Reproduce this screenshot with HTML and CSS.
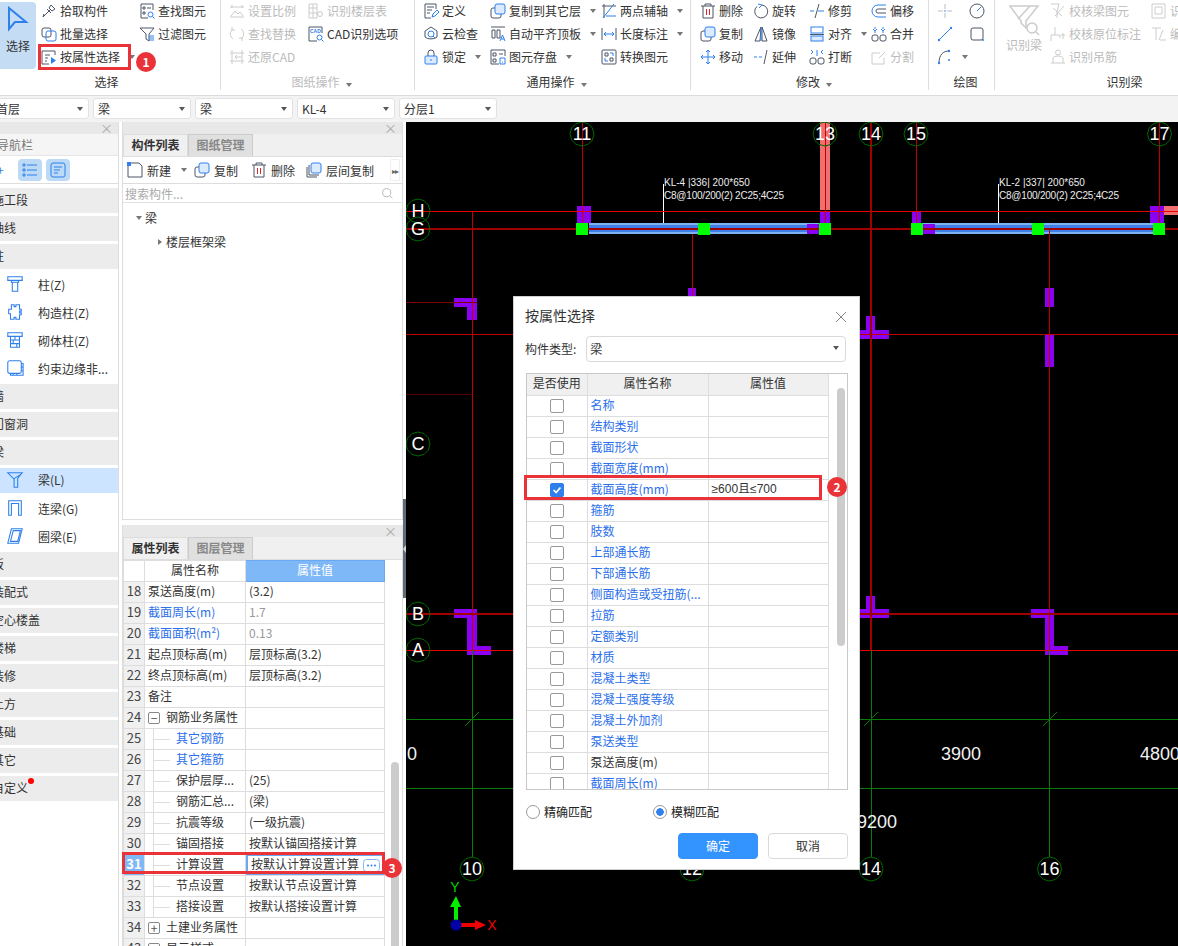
FILE: index.html
```html
<!DOCTYPE html>
<html lang="en">
<head>
  <meta charset="UTF-8" />
  <title>按属性选择</title>
  <link rel="stylesheet" href="styles.css">
</head>
<body>
<div class="app">

  <!-- Ribbon -->
  <div class="ribbon">
    <div class="group g1">
      <div class="group-body">
        <div class="big active">
          <svg class="big-ic" viewBox="0 0 24 26"><path class="b2" d="M3 2v21l6-7h11z"/></svg>
          <span>选择</span>
        </div>
        <div class="tool"><svg class="ic" viewBox="0 0 16 16"><path d="M2 14l7-7M6 6l4 4M10 2l4 4-3 2-3-3z M2 14l1-3"/></svg>拾取构件</div>
        <div class="tool"><svg class="ic" viewBox="0 0 16 16"><rect x="1" y="2" width="9" height="9" rx="2"/><rect class="b" x="5" y="5" width="10" height="10" rx="2"/></svg>批量选择</div>
        <div class="tool"><svg class="ic" viewBox="0 0 16 16"><path d="M14 6V2H1v13h7M4 6h5M4 9h3M4 12h2"/><path class="bf" d="M10 8l5 3.5-5 3.5z"/></svg>按属性选择<i class="caret"></i></div>
        <div class="tool"><svg class="ic" viewBox="0 0 16 16"><path d="M14 7V1H2v14h7M4 4h2v2H4zM8 5h4M4 9h2v2H4z"/><circle class="b" cx="11.5" cy="11.5" r="2.5"/><path class="b" d="M13.5 13.5l2 2"/></svg>查找图元</div>
        <div class="tool"><svg class="ic" viewBox="0 0 16 16"><path d="M1 2h14l-5 6v7l-3-2V8z"/><path class="b" d="M10 10h5M10 12h5M10 14h5"/></svg>过滤图元</div>
      </div>
      <div class="group-label label-select">选择</div>
    </div>

    <div class="group g2 off">
      <div class="group-body">
        <div class="tool"><svg class="ic" viewBox="0 0 16 16"><path d="M1 4h14M1 14h14M3 2v3M13 2v3M2 13l4-5 3 3 2-2 3 4"/></svg>设置比例</div>
        <div class="tool"><svg class="ic" viewBox="0 0 16 16"><path d="M5 1v14M1 5h8M1 10h8M1 1h8v14H1z"/><circle cx="12" cy="11" r="2.5"/></svg>识别楼层表</div>
        <div class="tool"><svg class="ic" viewBox="0 0 16 16"><path d="M4 3A6 6 0 0 0 4 13M12 3a6 6 0 0 1 0 10M3 1v3h3M13 15v-3h-3"/></svg>查找替换</div>
        <div class="tool on"><svg class="ic" viewBox="0 0 16 16"><path d="M14 7V1H1v14h8"/><circle class="b" cx="11.5" cy="11.5" r="2.5"/><path class="b" d="M13.5 13.5l2 2"/><text class="tiny" x="2" y="7">CAD</text></svg>CAD识别选项</div>
        <div class="tool"><svg class="ic" viewBox="0 0 16 16"><path d="M3 1v14M13 1v14M1 4h14M1 12h14M6 8h6M6 8l2-2M6 8l2 2"/></svg>还原CAD</div>
      </div>
      <div class="group-label">图纸操作<i class="caret"></i></div>
    </div>

    <div class="group g3">
      <div class="group-body">
        <div class="tool"><svg class="ic" viewBox="0 0 16 16"><path d="M13 6V1H2v14h6M4 4h7M4 7h5M4 10h3"/><path class="b" d="M9 14l1-3 4-4 2 2-4 4z"/></svg>定义</div>
        <div class="tool"><svg class="ic" viewBox="0 0 16 16"><rect x="1" y="5" width="10" height="10" rx="2"/><rect class="bl" x="5" y="1" width="10" height="10" rx="2"/></svg>复制到其它层<i class="caret"></i></div>
        <div class="tool"><svg class="ic" viewBox="0 0 16 16"><path d="M1 3h14M3 1v14"/><path class="b" d="M13 1L2 15M5 13h10"/></svg>两点辅轴<i class="caret"></i></div>
        <div class="tool"><svg class="ic" viewBox="0 0 16 16"><path d="M8 1l6 4v6a7 4 0 0 1-12 0V5z"/><circle class="b" cx="8" cy="8" r="3"/><path class="b" d="M10 10l2 2"/></svg>云检查</div>
        <div class="tool"><svg class="ic" viewBox="0 0 16 16"><path d="M1 1h14M2 4h3v8H2zM7 4h3v8H7z"/><path class="b" d="M10 15l2.500-6 2.500 6M11 13h3"/></svg>自动平齐顶板<i class="caret"></i></div>
        <div class="tool"><svg class="ic" viewBox="0 0 16 16"><path d="M1 2v12M15 2v12"/><path class="b" d="M3 8h10M3 8l2-2M3 8l2 2M13 8l-2-2M13 8l-2 2"/></svg>长度标注<i class="caret"></i></div>
        <div class="tool"><svg class="ic" viewBox="0 0 16 16"><path d="M5 7V4a3 3 0 0 1 6 0v3"/><rect class="bl" x="2" y="7" width="12" height="8" rx="1"/><path class="b" d="M8 10v2"/></svg>锁定<i class="caret"></i></div>
        <div class="tool"><svg class="ic" viewBox="0 0 16 16"><path d="M15 7V1H1v14h8M3 4h3v3H3zM9 5h4M3 10h3v3H3z"/><path class="b" d="M10 9h5v6h-5zM12 13h1"/></svg>图元存盘<i class="caret"></i></div>
        <div class="tool"><svg class="ic" viewBox="0 0 16 16"><rect x="1" y="1" width="14" height="14" rx="1"/><path d="M4 4h3v3H4zM9 9h3v3H9z"/><path class="b" d="M12 7V4H9M4 9v3h3"/></svg>转换图元</div>
      </div>
      <div class="group-label">通用操作<i class="caret"></i></div>
    </div>

    <div class="group g4">
      <div class="group-body">
        <div class="tool"><svg class="ic" viewBox="0 0 16 16"><path d="M1 3h14M5 3V1h6v2M3 3v12h10V3"/><path class="r" d="M6.500 6v6M9.500 6v6"/></svg>删除</div>
        <div class="tool"><svg class="ic" viewBox="0 0 16 16"><path d="M9 2a6.500 6.500 0 1 1-5 1.500"/><path class="b" d="M5 1l4 1-3 3"/></svg>旋转</div>
        <div class="tool"><svg class="ic" viewBox="0 0 16 16"><path d="M10 1L6 15"/><path class="b" d="M1 8h4M9 8h6"/></svg>修剪</div>
        <div class="tool"><svg class="ic" viewBox="0 0 16 16"><path class="b" d="M15 2H7a6 6 0 0 0 0 12h8"/><path d="M15 6H7a2 2 0 0 0 0 4h8"/></svg>偏移</div>
        <div class="tool"><svg class="ic" viewBox="0 0 16 16"><rect x="1" y="5" width="10" height="10" rx="2"/><rect class="bl" x="5" y="1" width="10" height="10" rx="2"/></svg>复制</div>
        <div class="tool"><svg class="ic" viewBox="0 0 16 16"><path d="M8 1L2 15h5zM9 1l5 14H9z"/><path class="b" d="M8 1v14"/></svg>镜像</div>
        <div class="tool"><svg class="ic" viewBox="0 0 16 16"><rect class="b" x="2" y="1" width="12" height="6"/><rect class="bl" x="2" y="10" width="12" height="5"/><path d="M1 8.500h14"/></svg>对齐<i class="caret"></i></div>
        <div class="tool"><svg class="ic" viewBox="0 0 16 16"><rect x="1" y="9" width="6" height="6" rx="2"/><rect x="9" y="9" width="6" height="6" rx="2"/><path class="b" d="M4 1v2M4 5v2M12 1v2M12 5v2M2 3l2 2 2-2M10 3l2 2 2-2"/></svg>合并</div>
        <div class="tool"><svg class="ic" viewBox="0 0 16 16"><path class="b" d="M8 1v14M1 8h14M8 1L6 3M8 1l2 2M8 15l-2-2M8 15l2-2M1 8l2-2M1 8l2 2M15 8l-2-2M15 8l-2 2"/></svg>移动</div>
        <div class="tool"><svg class="ic" viewBox="0 0 16 16"><path class="b" d="M1 8h3M6 8h3"/><path d="M14 1l-3 14"/></svg>延伸</div>
        <div class="tool"><svg class="ic" viewBox="0 0 16 16"><rect x="1" y="9" width="6" height="6" rx="2"/><rect x="9" y="9" width="6" height="6" rx="2"/><path class="b" d="M2 1l2 2-2 2M14 1l-2 2 2 2M8 1v6"/></svg>打断</div>
        <div class="tool off"><svg class="ic" viewBox="0 0 16 16"><path d="M13 9v6H1V4h8M8 9l6-6"/></svg>分割</div>
      </div>
      <div class="group-label">修改<i class="caret"></i></div>
    </div>

    <div class="group g5">
      <div class="group-body">
        <div class="tool"><svg class="ic" viewBox="0 0 16 16"><path class="g" d="M8 1v5M8 10v5M1 8h5M10 8h5"/><circle class="bf" cx="8" cy="8" r="0.800"/></svg></div>
        <div class="tool"><svg class="ic" viewBox="0 0 16 16"><circle cx="8" cy="8" r="7"/><path class="b" d="M8 8l4-4"/></svg></div>
        <div class="tool"><svg class="ic" viewBox="0 0 16 16"><path class="b" d="M2 14L14 2"/><circle class="bf" cx="2" cy="14" r="1.200"/><circle class="bf" cx="14" cy="2" r="1.200"/></svg></div>
        <div class="tool"><svg class="ic" viewBox="0 0 16 16"><rect x="2" y="2" width="12" height="12" rx="2"/><circle class="bf" cx="14" cy="14" r="1"/></svg></div>
        <div class="tool"><svg class="ic" viewBox="0 0 16 16"><path d="M2 14C2 6 6 2 12 2"/><circle class="bf" cx="2" cy="14" r="1.200"/><circle class="bf" cx="12" cy="2" r="1.200"/><circle class="bf" cx="12" cy="11" r="1"/></svg><i class="caret"></i></div>
      </div>
      <div class="group-label">绘图</div>
    </div>

    <div class="group g6 off">
      <div class="group-body">
        <div class="big big-off">
          <svg class="big-ic big-filter" viewBox="0 0 32 32"><path d="M2 2h28L18 17v7l-5-5v-2z M22 2L10 15"/><circle cx="24" cy="24" r="5"/><path d="M28 28l3 3"/></svg>
          <span>识别梁</span>
        </div>
        <div class="tool"><svg class="ic" viewBox="0 0 16 16"><path d="M1 1h8l-2 8v6M14 3L5 13M3 5l9 8"/></svg>校核梁图元</div>
        <div class="tool"><svg class="ic" viewBox="0 0 16 16"><path d="M1 1h13v14H1zM4 4h7v7H4z"/></svg>识别...</div>
        <div class="tool"><svg class="ic" viewBox="0 0 16 16"><path d="M5 1v8M1 15V9h9v3M11 9h4M13 7v6"/></svg>校核原位标注</div>
        <div class="tool"><svg class="ic" viewBox="0 0 16 16"><path d="M1 2h9M5 2v12M12 4l-4 10M9 14h6"/></svg>编辑...</div>
        <div class="tool"><svg class="ic" viewBox="0 0 16 16"><circle cx="8" cy="3.500" r="2.500"/><path d="M3 14V9a5 2 0 0 1 10 0v5M1 14h14"/></svg>识别吊筋</div>
      </div>
      <div class="group-label">识别梁</div>
    </div>
  </div>

  <!-- Floor / type selectors -->
  <div class="selbar">
    <div class="sel">首层<i class="caret"></i></div>
    <div class="sel">梁<i class="caret"></i></div>
    <div class="sel">梁<i class="caret"></i></div>
    <div class="sel">KL-4<i class="caret"></i></div>
    <div class="sel">分层1<i class="caret"></i></div>
  </div>

  <div class="main">

    <!-- Navigation -->
    <div class="nav">
      <div class="closebar"><span class="close-x">×</span></div>
      <div class="nav-title">导航栏</div>
      <div class="nav-tools">
        <span class="nav-plus">+</span>
        <span class="nav-btn"><svg class="ic icb" viewBox="0 0 16 16"><path d="M5 3h10M5 8h10M5 13h10M1 2h2v2H1zM1 7h2v2H1zM1 12h2v2H1z"/></svg></span>
        <span class="nav-btn"><svg class="ic icb" viewBox="0 0 16 16"><rect x="1" y="1" width="14" height="14" rx="2"/><path d="M4 5h8M4 8h6M4 11h4"/></svg></span>
      </div>
      <div class="nav-head">施工段</div>
      <div class="nav-head">轴线</div>
      <div class="nav-head">柱</div>
      <div class="nav-item"><svg class="nav-ic" viewBox="0 0 20 20"><path d="M2 2h16v4H2zM6 6h8v2H6zM7 8h6v10H7z"/></svg>柱(Z)</div>
      <div class="nav-item"><svg class="nav-ic" viewBox="0 0 20 20"><path d="M6 2h3v2h2V2h4v5h2v2h-2v2h2v2h-2v5h-4v-2H9v2H5v-6H3V7h3z"/></svg>构造柱(Z)</div>
      <div class="nav-item"><svg class="nav-ic" viewBox="0 0 20 20"><path d="M2 2h16v4H2zM5 6h10v12H5zM5 10h10M5 14h10M10 6v4M8 10v4M12 14v4"/></svg>砌体柱(Z)</div>
      <div class="nav-item"><svg class="nav-ic" viewBox="0 0 20 20"><rect x="2" y="2" width="15" height="14" rx="2"/><path d="M17 5h2v13H5v-2M8 16v2M12 16v2M17 9h2M17 13h2"/></svg>约束边缘非...</div>
      <div class="nav-head">墙</div>
      <div class="nav-head">门窗洞</div>
      <div class="nav-head">梁</div>
      <div class="nav-item selected"><svg class="nav-ic" viewBox="0 0 20 20"><path d="M2 2h16l-5 6v10H9V9zM8 9l8-5"/></svg>梁(L)</div>
      <div class="nav-item"><svg class="nav-ic" viewBox="0 0 20 20"><path d="M3 18V2h14v16h-3V5H6v13z"/></svg>连梁(G)</div>
      <div class="nav-item"><svg class="nav-ic" viewBox="0 0 20 20"><path d="M6 2h12l-4 16H2zM8 4h8l-3 12H5z"/></svg>圈梁(E)</div>
      <div class="nav-head">板</div>
      <div class="nav-head">装配式</div>
      <div class="nav-head">空心楼盖</div>
      <div class="nav-head">楼梯</div>
      <div class="nav-head">装修</div>
      <div class="nav-head">土方</div>
      <div class="nav-head">基础</div>
      <div class="nav-head">其它</div>
      <div class="nav-head has-dot">自定义<i class="red-dot"></i></div>
    </div>

    <!-- Component list + properties -->
    <div class="side">
      <div class="panel panel-list">
        <div class="closebar"><span class="close-x">×</span></div>
        <div class="tabs"><span class="tab current">构件列表</span><span class="tab">图纸管理</span></div>
        <div class="list-tools">
          <span class="lt lt-new"><svg class="ic" viewBox="0 0 16 16"><path d="M4 1h8l3 3v11H1V4"/><path class="bf" d="M0 0h4v4H0z"/></svg>新建<i class="caret"></i></span>
          <span class="lt lt-copy"><svg class="ic" viewBox="0 0 16 16"><rect x="1" y="5" width="10" height="10" rx="2"/><rect class="bl" x="5" y="1" width="10" height="10" rx="2"/></svg>复制</span>
          <span class="lt lt-del"><svg class="ic" viewBox="0 0 16 16"><path d="M1 3h14M5 3V1h6v2M3 3v12h10V3"/><path class="r" d="M6.500 6v6M9.500 6v6"/></svg>删除</span>
          <span class="lt lt-floor"><svg class="ic" viewBox="0 0 16 16"><path d="M1 5v10h10M3 3v10h10"/><rect class="bl" x="5" y="1" width="10" height="10" rx="2"/></svg>层间复制</span>
          <span class="lt-more">▸▸</span>
        </div>
        <div class="search">
          <span>搜索构件...</span>
          <svg class="search-ic" viewBox="0 0 16 16"><circle cx="7" cy="7" r="5"/><path d="M11 11l3 3"/></svg>
        </div>
        <div class="tree">
          <div class="tree-row"><i class="arrow-down"></i>梁</div>
          <div class="tree-row tree-child"><i class="arrow-right"></i>楼层框架梁</div>
        </div>
      </div>

      <div class="panel panel-props">
        <div class="closebar"><span class="close-x">×</span></div>
        <div class="tabs"><span class="tab current">属性列表</span><span class="tab">图层管理</span></div>
        <div class="props-wrap">
          <table class="props">
            <colgroup><col class="pc-n"><col class="pc-a"><col class="pc-b"></colgroup>
            <tr class="head"><th></th><th>属性名称</th><th class="th-val">属性值</th></tr>
            <tr><td class="n">18</td><td>泵送高度(m)</td><td>(3.2)</td></tr>
            <tr><td class="n">19</td><td class="link">截面周长(m)</td><td class="dim">1.7</td></tr>
            <tr><td class="n">20</td><td class="link">截面面积(m²)</td><td class="dim">0.13</td></tr>
            <tr><td class="n">21</td><td>起点顶标高(m)</td><td>层顶标高(3.2)</td></tr>
            <tr><td class="n">22</td><td>终点顶标高(m)</td><td>层顶标高(3.2)</td></tr>
            <tr><td class="n">23</td><td>备注</td><td></td></tr>
            <tr><td class="n">24</td><td><i class="expander">−</i>钢筋业务属性</td><td></td></tr>
            <tr><td class="n">25</td><td class="branch-cell link"><i class="branch"></i>其它钢筋</td><td></td></tr>
            <tr><td class="n">26</td><td class="branch-cell link"><i class="branch"></i>其它箍筋</td><td></td></tr>
            <tr><td class="n">27</td><td class="branch-cell"><i class="branch"></i>保护层厚...</td><td>(25)</td></tr>
            <tr><td class="n">28</td><td class="branch-cell"><i class="branch"></i>钢筋汇总...</td><td>(梁)</td></tr>
            <tr><td class="n">29</td><td class="branch-cell"><i class="branch"></i>抗震等级</td><td>(一级抗震)</td></tr>
            <tr><td class="n">30</td><td class="branch-cell"><i class="branch"></i>锚固搭接</td><td>按默认锚固搭接计算</td></tr>
            <tr><td class="n n-on">31</td><td class="branch-cell"><i class="branch"></i>计算设置</td><td class="editing"><span class="edit-box">按默认计算设置计算<svg class="dots" viewBox="0 0 17 13"><rect x="0.500" y="0.500" width="16" height="12" rx="3"/><circle cx="5" cy="6.500" r="1"/><circle cx="8.500" cy="6.500" r="1"/><circle cx="12" cy="6.500" r="1"/></svg></span></td></tr>
            <tr><td class="n">32</td><td class="branch-cell"><i class="branch"></i>节点设置</td><td>按默认节点设置计算</td></tr>
            <tr><td class="n">33</td><td class="branch-cell"><i class="branch"></i>搭接设置</td><td>按默认搭接设置计算</td></tr>
            <tr><td class="n">34</td><td><i class="expander">+</i>土建业务属性</td><td></td></tr>
            <tr><td class="n">43</td><td><i class="expander">+</i>显示样式</td><td></td></tr>
          </table>
          <div class="props-track"><div class="props-thumb"></div></div>
        </div>
      </div>
    </div>

    <div class="splitter"><div class="grip"><i></i></div></div>

    <!-- Drawing canvas -->
    <div class="canvas">
      <svg class="drawing" viewBox="406 122 772 824">
        <defs>
          <polygon id="bub" points="0,-12 6,-10.400 10.400,-6 12,0 10.400,6 6,10.400 0,12 -6,10.400 -10.400,6 -12,0 -10.400,-6 -6,-10.400"/>
        </defs>

        <g class="pink">
          <rect x="820" y="122" width="10" height="88"/>
          <rect x="1164" y="206" width="14" height="9"/>
        </g>

        <g class="purple">
          <path d="M454 298h23v22h-10v-13h-13z"/>
          <path d="M454 609h23v37h14v9h-24v-37h-13z"/>
          <path d="M866 316h9v14h14v9h-29v-9h6z"/>
          <path d="M866 596h9v13h14v9h-29v-9h6z"/>
          <path d="M1031 609h23v37h14v9h-23v-37h-14z"/>
          <rect x="1045" y="288" width="9" height="19"/>
          <rect x="1045" y="335" width="9" height="32"/>
          <rect x="688" y="288" width="8" height="8"/>
          <rect x="577" y="206" width="14" height="17"/>
          <rect x="820" y="211" width="10" height="12"/>
          <rect x="912" y="211" width="9" height="12"/>
          <rect x="1150" y="206" width="14" height="17"/>
        </g>

        <g class="beam">
          <rect x="589" y="223" width="231" height="11"/>
          <rect x="920" y="223" width="233" height="11"/>
        </g>
        <g class="beam-core">
          <rect x="589" y="225" width="231" height="7"/>
          <rect x="920" y="225" width="233" height="7"/>
        </g>
        <g class="purple">
          <rect x="807" y="224" width="13" height="10"/>
          <rect x="923" y="224" width="12" height="10"/>
        </g>

        <g class="leader">
          <path d="M663.500 184v39M998.500 184v39"/>
        </g>

        <g class="grid-red">
          <path d="M406 334.500h772"/>
          <path d="M472.500 211v439M582.500 122v107M825.500 122v107M916.500 122v107M1159.500 122v107M1049.500 229v421M692.500 234v62"/>
        </g>
        <path class="grid-bright" d="M406 211.500h772M406 650.500h772"/>
        <path class="grid-thick" d="M406 229h772M406 614h772M871 122v528"/>
        <path class="grid-dark" d="M406 302.500h71"/>
        <path class="grid-faint" d="M406 394.500h66"/>
        <path class="grid-green" d="M406 719.500h772M406 788.500h772M472.500 650v207M871.500 650v207M1049.500 650v207M465 726l14-14M864 726l14-14M1043 726l14-14"/>

        <g class="green-sq">
          <rect x="576" y="223" width="12" height="12"/>
          <rect x="698" y="223" width="12" height="12"/>
          <rect x="819" y="223" width="12" height="12"/>
          <rect x="911" y="223" width="12" height="12"/>
          <rect x="1032" y="223" width="12" height="12"/>
          <rect x="1153" y="223" width="12" height="12"/>
        </g>

        <g class="beam-text">
          <text x="664" y="186">KL-4 |336| 200*650</text>
          <text x="664" y="199" textLength="120">C8@100/200(2) 2C25;4C25</text>
          <text x="999" y="186">KL-2 |337| 200*650</text>
          <text x="999" y="199" textLength="120">C8@100/200(2) 2C25;4C25</text>
        </g>

        <g class="bubbles">
          <use href="#bub" x="582" y="134"/><use href="#bub" x="825" y="134"/><use href="#bub" x="871" y="134"/><use href="#bub" x="916" y="134"/><use href="#bub" x="1159.500" y="134"/>
          <use href="#bub" x="418" y="211"/><use href="#bub" x="418" y="229"/><use href="#bub" x="418" y="444"/><use href="#bub" x="418" y="614"/><use href="#bub" x="418" y="650"/>
          <use href="#bub" x="472" y="869"/><use href="#bub" x="692" y="869"/><use href="#bub" x="871" y="869"/><use href="#bub" x="1049.500" y="869"/>
        </g>
        <g class="bubble-text">
          <text x="582" y="140">11</text><text x="825" y="140">13</text><text x="871" y="140">14</text><text x="916" y="140">15</text><text x="1159.500" y="140">17</text>
          <text x="418" y="217">H</text><text x="418" y="235">G</text><text x="418" y="450">C</text><text x="418" y="620">B</text><text x="418" y="656">A</text>
          <text x="472" y="875">10</text><text x="692" y="875">12</text><text x="871" y="875">14</text><text x="1049.500" y="875">16</text>
        </g>

        <g class="dim-text">
          <text x="407" y="760">0</text>
          <text x="941" y="760">3900</text>
          <text x="1140" y="760">4800</text>
          <text x="857" y="828">9200</text>
        </g>

        <!-- axis marker -->
        <path class="axis-y" d="M454 920v-13h-4l6-11 5 11h-3v13z"/>
        <path class="axis-x" d="M460 923h15v-3l11 5-11 5v-3h-15z"/>
        <circle class="axis-o" cx="456" cy="925" r="5.500"/>
        <text class="axis-yl" x="455" y="892">Y</text>
        <text class="axis-xl" x="492" y="930">X</text>
      </svg>
    </div>
  </div>

  <!-- Dialog -->
  <div class="dialog">
    <div class="dlg-title"><span>按属性选择</span><svg class="dlg-close" viewBox="0 0 12 12"><path d="M1 1l10 10M11 1L1 11"/></svg></div>
    <div class="dlg-form">
      <label>构件类型:</label>
      <div class="dlg-select">梁<i class="caret"></i></div>
    </div>
    <div class="dlg-table">
      <table class="attrs">
        <colgroup><col class="ac-a"><col class="ac-b"><col class="ac-c"></colgroup>
        <tr class="head"><th>是否使用</th><th>属性名称</th><th>属性值</th></tr>
        <tr><td><i class="cb"></i></td><td class="link">名称</td><td></td></tr>
        <tr><td><i class="cb"></i></td><td class="link">结构类别</td><td></td></tr>
        <tr><td><i class="cb"></i></td><td class="link">截面形状</td><td></td></tr>
        <tr><td><i class="cb"></i></td><td class="link">截面宽度(mm)</td><td></td></tr>
        <tr><td><i class="cb checked"><svg viewBox="0 0 14 14"><path d="M3 7l3 3 5-6"/></svg></i></td><td class="link">截面高度(mm)</td><td class="range">≥600且≤700</td></tr>
        <tr><td><i class="cb"></i></td><td class="link">箍筋</td><td></td></tr>
        <tr><td><i class="cb"></i></td><td class="link">肢数</td><td></td></tr>
        <tr><td><i class="cb"></i></td><td class="link">上部通长筋</td><td></td></tr>
        <tr><td><i class="cb"></i></td><td class="link">下部通长筋</td><td></td></tr>
        <tr><td><i class="cb"></i></td><td class="link">侧面构造或受扭筋(...</td><td></td></tr>
        <tr><td><i class="cb"></i></td><td class="link">拉筋</td><td></td></tr>
        <tr><td><i class="cb"></i></td><td class="link">定额类别</td><td></td></tr>
        <tr><td><i class="cb"></i></td><td class="link">材质</td><td></td></tr>
        <tr><td><i class="cb"></i></td><td class="link">混凝土类型</td><td></td></tr>
        <tr><td><i class="cb"></i></td><td class="link">混凝土强度等级</td><td></td></tr>
        <tr><td><i class="cb"></i></td><td class="link">混凝土外加剂</td><td></td></tr>
        <tr><td><i class="cb"></i></td><td class="link">泵送类型</td><td></td></tr>
        <tr><td><i class="cb"></i></td><td>泵送高度(m)</td><td></td></tr>
        <tr><td><i class="cb"></i></td><td class="link">截面周长(m)</td><td></td></tr>
      </table>
      <div class="dlg-track"><div class="dlg-thumb"></div></div>
    </div>
    <div class="dlg-radios">
      <span class="radio-item"><i class="radio"></i>精确匹配</span>
      <span class="radio-item"><i class="radio on"></i>模糊匹配</span>
    </div>
    <div class="dlg-btns">
      <button class="btn primary">确定</button>
      <button class="btn">取消</button>
    </div>
  </div>

  <!-- Red call-outs -->
  <div class="mark box1"></div>
  <div class="mark box2"></div>
  <div class="mark box3"></div>
  <div class="badge badge1">1</div>
  <div class="badge badge2">2</div>
  <div class="badge badge3">3</div>
</div>
</body>
</html>
```

FILE: styles.css
```css
html, body {
  height: 100%;
  margin: 0;
  padding: 0;
  font-family: "Noto Sans CJK SC", "Noto Sans", sans-serif;
  font-size: 12px;
  color: #333;
  overflow: hidden;
}

* {
  box-sizing: border-box;
}

i {
  font-style: normal;
}

.app {
  position: relative;
  width: 1178px;
  height: 946px;
  display: flex;
  flex-direction: column;
  background: #fff;
  overflow: hidden;
}

/* shared icon strokes */
.ic {
  width: 16px;
  height: 16px;
  flex: none;
  fill: none;
  stroke: #4d5666;
  stroke-width: 1;
}

.ic .b, .icb {
  stroke: #2f80ed;
}

.ic .bl {
  stroke: #2f80ed;
  fill: #dbeafe;
}

.ic .bf {
  stroke: none;
  fill: #2f80ed;
}

.ic .r {
  stroke: #e0242c;
}

.ic .g {
  stroke: #b9bec6;
}

.g2 .tool.on .ic .tiny {
  stroke: none;
  fill: #2f80ed;
  font-family: "Liberation Sans", sans-serif;
  font-size: 5px;
  font-weight: 700;
}

.caret {
  display: inline-block;
  width: 0;
  height: 0;
  margin-left: 6px;
  border-left: 3px solid transparent;
  border-right: 3px solid transparent;
  border-top: 4px solid #777;
}

/* ribbon */
.ribbon {
  display: flex;
  flex: none;
  height: 96px;
  padding-bottom: 5px;
  overflow: hidden;
  background: #fff;
  border-bottom: 1px solid #dcdcdc;
}

.group {
  flex: none;
  border-right: 1px solid #ddd;
}

.group-body {
  display: grid;
  grid-auto-flow: row;
  grid-template-rows: repeat(3, 23px);
  height: 72px;
}

.group-label {
  text-align: center;
  line-height: 20px;
  height: 18px;
}

.label-select {
  padding-right: 7px;
}

.g1 { width: 221px; }
.g1 .group-body { grid-auto-flow: column; grid-template-columns: 41px 98px 1fr; }
.g2 { width: 194px; padding-left: 8px; }
.g2 .group-body { grid-template-columns: 79px 1fr; }
.g3 { width: 276px; padding-left: 8px; }
.g3 .group-body { grid-template-columns: 67px 111px 1fr; }
.g4 { width: 238px; padding-left: 9px; }
.g4 .group-body { grid-template-columns: 53px 56px 62px 1fr; }
.g5 { width: 66px; padding-left: 8px; }
.g5 .group-body { grid-template-columns: 32px 1fr; }
.g6 { width: 254px; padding-left: 5px; border-right: none; }
.g6 .group-body { grid-template-columns: 50px 101px 100px; }

.tool {
  display: flex;
  align-items: center;
  gap: 3px;
  padding-bottom: 2px;
  white-space: nowrap;
}

.off, .off .group-label {
  color: #bbb;
}

.off .ic, .off .ic * {
  stroke: #ccc;
  fill: none;
}

.g2 .tool.on {
  color: #333;
}

.g2 .tool.on .ic, .g2 .tool.on .ic * {
  stroke: #4d5666;
}

.g2 .tool.on .ic .b {
  stroke: #2f80ed;
}

.g6 .group-label, .group-label {
  color: #333;
}

.big {
  grid-row: 1 / 4;
  grid-column: 1;
  display: flex;
  flex-direction: column;
  align-items: center;
  height: 67px;
  margin-top: 2px;
}

.big.active {
  width: 36px;
  padding-top: 4px;
  background: #c4dcf4;
  border-radius: 0 4px 4px 0;
}

.big-ic {
  width: 24px;
  height: 26px;
  margin-bottom: 5px;
  fill: none;
  stroke-width: 2;
}

.big-ic .b2 {
  stroke: #2f80ed;
}

.big-filter {
  width: 32px;
  height: 32px;
  margin: 2px 0 0;
  stroke: #ccc;
  stroke-width: 1.500;
}

.big-off {
  width: 48px;
}

/* selector bar */
.selbar {
  display: flex;
  flex: none;
  gap: 4px;
  height: 26px;
  padding-top: 2px;
  margin-left: -9px;
  background: #f3f3f3;
}

.sel {
  display: flex;
  align-items: center;
  justify-content: space-between;
  width: 98px;
  height: 21px;
  padding: 0 5px 0 4px;
  background: #fff;
  border: 1px solid #e2e2e2;
  border-radius: 3px;
}

.selbar .caret {
  border-top-color: #555;
}

/* main area */
.main {
  display: flex;
  flex: 1;
  min-height: 0;
}

.closebar {
  display: flex;
  justify-content: flex-end;
  height: 12px;
  padding-right: 5px;
  background: #e8e8e8;
}

.close-x {
  font-size: 13px;
  line-height: 11px;
  color: #aaa;
}

/* navigation column */
.nav {
  flex: none;
  width: 119px;
  margin-right: 3px;
  border-right: 1px solid #ddd;
  background: #fff;
  overflow: hidden;
}

.nav-title {
  height: 22px;
  line-height: 21px;
  margin-left: -3px;
  color: #777;
  background: #f5f5f5;
  border-bottom: 1px solid #e6e6e6;
}

.nav-tools {
  display: flex;
  align-items: center;
  gap: 4px;
  height: 28px;
  border-bottom: 1px solid #ddd;
  margin-bottom: 4px;
}

.nav-plus {
  width: 14px;
  text-indent: -3px;
  color: #2f80ed;
  font-size: 12px;
}

.nav-btn {
  display: flex;
  align-items: center;
  justify-content: center;
  width: 24px;
  height: 22px;
  border-radius: 4px;
  background: #bcd9f5;
}

.nav-head {
  position: relative;
  height: 25px;
  line-height: 23px;
  margin-bottom: 3px;
  text-indent: -8px;
  background: #ececec;
}

.nav-item {
  display: flex;
  align-items: center;
  gap: 14px;
  height: 28px;
  padding: 0 0 2px 6px;
}

.nav-head + .nav-item {
  margin-top: -1px;
}

.nav-item + .nav-head {
  margin-top: 1px;
}

.nav-head + .nav-item.selected {
  height: 25px;
  margin-top: 0;
  margin-bottom: 2px;
  background: #cce4ff;
}

.nav-ic {
  flex: none;
  width: 18px;
  height: 18px;
  fill: none;
  stroke: #2f80ed;
  stroke-width: 1.200;
}

.red-dot {
  position: absolute;
  left: 28px;
  top: 2px;
  width: 6px;
  height: 6px;
  border-radius: 50%;
  background: #f00;
}

/* list and property panels */
.side {
  display: flex;
  flex-direction: column;
  flex: none;
  width: 281px;
  gap: 5px;
}

.panel {
  border-right: 1px solid #ddd;
  border-left: 1px solid #ddd;
  background: #fff;
}

.panel-list {
  height: 398px;
  border-bottom: 1px solid #ddd;
}

.panel-props {
  flex: 1;
  min-height: 0;
  overflow: hidden;
}

.tabs {
  display: flex;
  height: 23px;
  background: #f0f0f0;
  border-bottom: 1px solid #ddd;
}

.tab {
  width: 65px;
  line-height: 20px;
  text-align: center;
  color: #888;
  font-weight: 700;
  background: #e0e0e0;
  border: 1px solid #ccc;
  border-bottom: none;
}

.tab.current {
  color: #333;
  background: #f0f0f0;
  border-color: #ddd;
}

.list-tools {
  display: flex;
  align-items: center;
  height: 27px;
  border-bottom: 1px solid #ddd;
}

.lt {
  display: flex;
  align-items: center;
  gap: 4px;
  white-space: nowrap;
}

.lt-new { margin-left: 4px; width: 67px; }
.lt-copy { width: 57px; }
.lt-del { width: 55px; }
.lt-floor { width: 84px; }

.lt-more {
  width: 10px;
  height: 22px;
  line-height: 22px;
  font-size: 8px;
  letter-spacing: -1px;
  color: #666;
  background: #fff;
  border: 1px solid #eee;
  border-radius: 2px;
  text-align: center;
  overflow: hidden;
}

.search {
  display: flex;
  align-items: center;
  justify-content: space-between;
  height: 19px;
  padding: 0 8px 0 2px;
  color: #aaa;
  border-bottom: 1px solid #e2e2e2;
}

.search-ic {
  width: 13px;
  height: 13px;
  fill: none;
  stroke: #aaa;
}

.tree {
  padding: 3px 0 0 13px;
}

.tree-row {
  display: flex;
  align-items: center;
  height: 24px;
  padding-bottom: 1px;
}

.tree-child {
  padding-left: 22px;
}

.arrow-down {
  width: 0;
  height: 0;
  margin-right: 3px;
  border-left: 3px solid transparent;
  border-right: 3px solid transparent;
  border-top: 4px solid #777;
}

.arrow-right {
  width: 0;
  height: 0;
  margin-right: 4px;
  border-top: 3px solid transparent;
  border-bottom: 3px solid transparent;
  border-left: 4px solid #777;
}

.props-wrap {
  display: flex;
  height: 400px;
}

.props, .attrs {
  flex: none;
  table-layout: fixed;
  border-collapse: collapse;
}

.props {
  width: 261px;
}

.pc-n { width: 21px; }
.pc-a { width: 101px; }
.pc-b { width: 139px; }

.props tr, .attrs tr {
  height: 21px;
}

.props td, .props th, .attrs td, .attrs th {
  padding: 0 0 2px 3px;
  font-weight: 400;
  line-height: 18px;
  border: 1px solid #ddd;
  white-space: nowrap;
  overflow: hidden;
}

.props th {
  text-align: center;
  padding: 0 0 2px;
}

.props .th-val {
  color: #fff;
  background: #7fb8f6;
  border-color: #6aa9ef;
}

.props td.n {
  padding: 0 0 2px;
  font-size: 13px;
  text-align: center;
  background: #f0f0f0;
  color: #444;
}

.props td.n-on {
  color: #fff;
  font-weight: 700;
  background: #7fb8f6;
}

.link {
  color: #2b6fea;
}

.dim {
  color: #999;
}

.range {
  font-family: "Liberation Sans", "Noto Sans CJK SC", sans-serif;
}

.expander {
  display: inline-block;
  width: 12px;
  height: 12px;
  margin-right: 6px;
  line-height: 10px;
  text-align: center;
  vertical-align: -1px;
  color: #555;
  border: 1px solid #888;
  border-radius: 2px;
}

.props td.branch-cell {
  padding-left: 8px;
  background: linear-gradient(#ddd, #ddd) 8px 0 / 1px 100% no-repeat;
}

.branch {
  display: inline-block;
  width: 17px;
  height: 1px;
  margin-right: 6px;
  vertical-align: middle;
  background: #ddd;
}

.props td.editing {
  padding: 0;
}

.edit-box {
  display: flex;
  align-items: center;
  justify-content: space-between;
  height: 20px;
  padding: 0 3px 2px 3px;
  border: 1px solid #6aa9ef;
  border-left-width: 2px;
}

.dots {
  flex: none;
  width: 17px;
  height: 13px;
  margin-top: 2px;
  fill: #2f80ed;
}

.dots rect {
  fill: #fff;
  stroke: #7fb8f6;
}

.props-track {
  width: 18px;
  padding: 202px 4px 0 6px;
}

.props-thumb {
  width: 8px;
  height: 200px;
  border-radius: 4px;
  background: #ccc;
}

.splitter {
  flex: none;
  width: 3px;
  padding-top: 377px;
}

.grip {
  display: flex;
  align-items: center;
  width: 4px;
  height: 99px;
  background: #5f6b77;
}

.grip i {
  width: 0;
  height: 0;
  border-top: 4px solid transparent;
  border-bottom: 4px solid transparent;
  border-right: 3px solid #cfd4da;
}

/* drawing canvas */
.canvas {
  flex: 1;
  min-width: 0;
  background: #000;
  overflow: hidden;
}

.drawing {
  display: block;
  width: 772px;
  height: 824px;
  font-family: "Liberation Sans", Arial, sans-serif;
}

.pink { fill: #f07070; }
.purple { fill: #8a00f0; }
.beam { fill: #7fb0f0; }
.beam-core { fill: #3f7fe8; }
.leader { stroke: #fff; fill: none; }

.grid-red { stroke: #c00000; fill: none; }
.grid-bright { stroke: #e60000; fill: none; }
.grid-thick { stroke: #a00000; stroke-width: 2; fill: none; }
.grid-dark { stroke: #800000; fill: none; }
.grid-faint { stroke: #500000; fill: none; }
.grid-green { stroke: #0a7a0a; fill: none; }
.green-sq { fill: #00ff00; }

.beam-text {
  fill: #eee;
  font-size: 10px;
}

.bubbles use {
  fill: none;
  stroke: #006a00;
}

.bubble-text {
  fill: #fff;
  font-size: 18px;
  text-anchor: middle;
}

.dim-text {
  fill: #f2f2f2;
  font-size: 18px;
}

.axis-y { fill: #00f000; }
.axis-x { fill: #f00000; }
.axis-o { fill: #0000a8; }

.axis-yl {
  fill: #00d000;
  font-size: 14px;
  text-anchor: middle;
}

.axis-xl {
  fill: #f00000;
  font-size: 14px;
  text-anchor: middle;
}

/* dialog */
.dialog {
  position: absolute;
  left: 513px;
  top: 296px;
  width: 347px;
  height: 574px;
  padding: 0 11px 0 11px;
  background: #fff;
  border: 1px solid #d0d0d0;
}

.dlg-title {
  display: flex;
  align-items: center;
  justify-content: space-between;
  height: 39px;
  padding: 0 1px 3px 0;
  font-size: 14px;
}

.dlg-close {
  width: 12px;
  height: 12px;
  margin-top: 3px;
  fill: none;
  stroke: #888;
}

.dlg-form {
  display: flex;
  align-items: center;
  height: 26px;
  gap: 10px;
}

.dlg-form label {
  padding-bottom: 2px;
}

.dlg-select {
  display: flex;
  flex: 1;
  align-items: center;
  justify-content: space-between;
  height: 26px;
  padding: 0 6px 2px 3px;
  margin-right: 2px;
  border: 1px solid #d9d9d9;
  border-radius: 4px;
}

.dlg-select .caret {
  border-top-color: #555;
}

.dlg-table {
  display: flex;
  height: 417px;
  margin: 11px 0 0 1px;
  border: 1px solid #c8c8c8;
  overflow: hidden;
}

.attrs {
  width: 301px;
}

.ac-a { width: 60px; }
.ac-b { width: 121px; }
.ac-c { width: 120px; }

.attrs th {
  padding: 0 0 2px;
  text-align: center;
  background: #f0f0f0;
}

.attrs td:first-child {
  padding: 0;
  text-align: center;
}

.attrs tr:first-child th {
  border-top: none;
}

.attrs th:first-child, .attrs td:first-child {
  border-left: none;
}

.cb {
  display: inline-block;
  width: 14px;
  height: 14px;
  vertical-align: -2px;
  border: 1px solid #999;
  border-radius: 2px;
  background: #fff;
}

.cb.checked {
  background: #2f80ed;
  border-color: #2f80ed;
}

.cb svg {
  display: block;
  width: 12px;
  height: 12px;
  fill: none;
  stroke: #fff;
  stroke-width: 2;
}

.dlg-track {
  width: 19px;
  padding: 14px 3px 0 8px;
}

.dlg-thumb {
  width: 8px;
  height: 258px;
  border-radius: 4px;
  background: #ccc;
}

.dlg-radios {
  display: flex;
  align-items: center;
  height: 43px;
  padding-left: 1px;
}

.radio-item {
  display: flex;
  align-items: center;
  gap: 4px;
  width: 127px;
  color: #222;
}

.radio {
  width: 14px;
  height: 14px;
  border: 1px solid #999;
  border-radius: 50%;
}

.radio.on {
  border: 1px solid #999;
  background: radial-gradient(circle, #2f80ed 0 3.5px, #fff 4px);
}

.dlg-btns {
  display: flex;
  justify-content: flex-end;
  gap: 10px;
}

.btn {
  width: 80px;
  height: 26px;
  padding: 0 0 2px;
  font: inherit;
  color: #333;
  background: #fff;
  border: 1px solid #d9d9d9;
  border-radius: 4px;
}

.btn.primary {
  color: #fff;
  background: #3393ff;
  border-color: #3393ff;
}

/* red call-outs over everything */
.mark {
  position: absolute;
  border: 3px solid #ea3338;
}

.box1 { left: 38px; top: 44px; width: 93px; height: 26px; }
.box2 { left: 524px; top: 475px; width: 298px; height: 25px; }
.box3 { left: 122px; top: 852px; width: 263px; height: 22px; }

.badge {
  position: absolute;
  width: 20px;
  height: 20px;
  line-height: 20px;
  text-align: center;
  color: #fff;
  font-weight: 700;
  border-radius: 50%;
  background: #ea3338;
}

.badge1 { left: 136px; top: 52px; }
.badge2 { left: 827px; top: 477px; }
.badge3 { left: 382px; top: 858px; }
```
